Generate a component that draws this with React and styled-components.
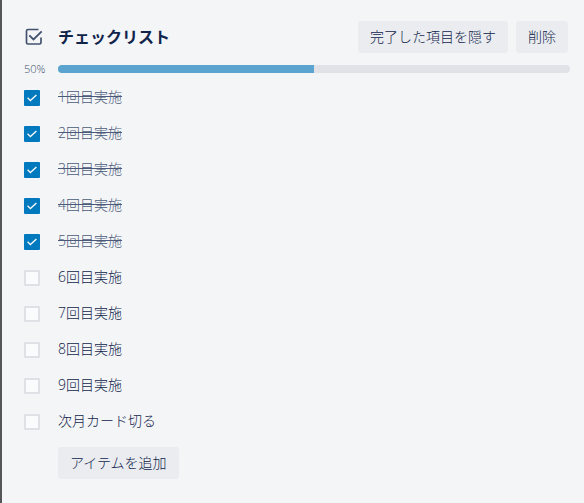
import React, { useState } from "react";
import styled, { createGlobalStyle } from "styled-components";

const GlobalStyle = createGlobalStyle`
  *, *::before, *::after {
    box-sizing: border-box;
  }
  body {
    margin: 0;
    background-color: #f4f5f7;
    color: #10244a;
    font-family: "Open Sans", "Noto Sans CJK JP", sans-serif;
    font-size: 14px;
    font-weight: 300;
    line-height: 20px;
  }
`;

const Panel = styled.main`
  min-height: 100vh;
  padding: 21px 14px 24px 22px;
  border-left: 2px solid #55565a;
`;
const Header = styled.header`
  display: flex;
  align-items: center;
  gap: 8px;
  padding-right: 2px;
`;
const Title = styled.h3`
  flex: 1;
  display: flex;
  align-items: center;
  margin: 0;
  font-size: 16px;
  font-weight: 700;
`;
const TitleIcon = styled.svg`
  width: 20px;
  height: 20px;
  margin-right: 14px;
  color: #42526e;
`;
const Button = styled.button`
  height: 32px;
  padding: 0 12px;
  border: 0;
  border-radius: 3px;
  background-color: #eaecf0;
  color: inherit;
  font: inherit;
  white-space: nowrap;
  cursor: pointer;
  &:hover {
    background-color: #dfe1e6;
  }
`;
const Progress = styled.div`
  display: flex;
  align-items: center;
  margin: 8px 0 3px;
`;
const Percentage = styled.span`
  width: 34px;
  color: #42526e;
  font-size: 11px;
  line-height: 16px;
`;
const Track = styled.div`
  flex: 1;
  height: 8px;
  border-radius: 4px;
  background-color: #e0e2e7;
  overflow: hidden;
`;
const Bar = styled.div`
  height: 100%;
  background-color: #5ba4cf;
`;
const List = styled.ul`
  margin: 0 0 7px;
  padding: 0;
  list-style: none;
`;
const Item = styled.li`
  display: flex;
  align-items: center;
  height: 36px;
`;
const CheckCell = styled.span`
  display: grid;
  width: 34px;
  > * {
    grid-area: 1 / 1;
  }
`;
const Checkbox = styled.input`
  appearance: none;
  width: 16px;
  height: 16px;
  margin: 0;
  border: 2px solid #dfe1e6;
  border-radius: 1px;
  background-color: #fafbfc;
  cursor: pointer;
  &:checked {
    border-color: #0079bf;
    background-color: #0079bf;
  }
`;
const Tick = styled.svg`
  width: 16px;
  height: 16px;
  pointer-events: none;
`;
const ItemLabel = styled.label`
  padding-bottom: 2px;
  color: ${({ $done }) => ($done ? "#4a5a78" : "#10244a")};
  text-decoration: ${({ $done }) => ($done ? "line-through" : "none")};
  cursor: pointer;
`;
const Footer = styled.footer`
  padding-left: 34px;
`;

const initialItems = [
  { id: 1, name: "1回目実施", done: true },
  { id: 2, name: "2回目実施", done: true },
  { id: 3, name: "3回目実施", done: true },
  { id: 4, name: "4回目実施", done: true },
  { id: 5, name: "5回目実施", done: true },
  { id: 6, name: "6回目実施", done: false },
  { id: 7, name: "7回目実施", done: false },
  { id: 8, name: "8回目実施", done: false },
  { id: 9, name: "9回目実施", done: false },
  { id: 10, name: "次月カード切る", done: false },
];

function ChecklistItem({ item, onToggle }) {
  const inputId = `item-${item.id}`;
  return (
    <Item>
      <CheckCell>
        <Checkbox
          type="checkbox"
          id={inputId}
          checked={item.done}
          onChange={() => onToggle(item.id)}
        />
        {item.done && (
          <Tick viewBox="0 0 16 16" fill="none" aria-hidden="true">
            <path d="M3.6 7.8l2.800 2.800 6-5.600" stroke="#fff" strokeWidth="1.300" />
          </Tick>
        )}
      </CheckCell>
      <ItemLabel htmlFor={inputId} $done={item.done}>
        {item.name}
      </ItemLabel>
    </Item>
  );
}

export default function App() {
  const [items, setItems] = useState(initialItems);
  const [hideDone, setHideDone] = useState(false);

  const doneCount = items.filter((item) => item.done).length;
  const percent = Math.round((doneCount / items.length) * 100);
  const visibleItems = hideDone ? items.filter((item) => !item.done) : items;

  function handleToggle(id) {
    setItems((list) =>
      list.map((item) => (item.id === id ? { ...item, done: !item.done } : item))
    );
  }

  return (
    <>
      <GlobalStyle />
      <Panel>
        <Header>
          <Title>
            <TitleIcon viewBox="0 0 20 20" fill="none" aria-hidden="true">
              <path
                d="M14.500 2.500H4Q2.500 2.500 2.500 4V15.500Q2.500 17 4 17H15.500Q17 17 17 15.500V10.500"
                stroke="currentColor"
                strokeWidth="1.700"
              />
              <path
                d="M5.300 8.300l4.200 4.200 8.200-8.200"
                stroke="currentColor"
                strokeWidth="1.800"
              />
            </TitleIcon>
            チェックリスト
          </Title>
          <Button type="button" onClick={() => setHideDone((x) => !x)}>
            完了した項目を隠す
          </Button>
          <Button type="button">削除</Button>
        </Header>
        <Progress>
          <Percentage>{percent}%</Percentage>
          <Track role="progressbar" aria-label="チェックリスト" aria-valuenow={percent}>
            <Bar style={{ width: `${percent}%` }} />
          </Track>
        </Progress>
        <List>
          {visibleItems.map((item) => (
            <ChecklistItem key={item.id} item={item} onToggle={handleToggle} />
          ))}
        </List>
        <Footer>
          <Button type="button">アイテムを追加</Button>
        </Footer>
      </Panel>
    </>
  );
}
